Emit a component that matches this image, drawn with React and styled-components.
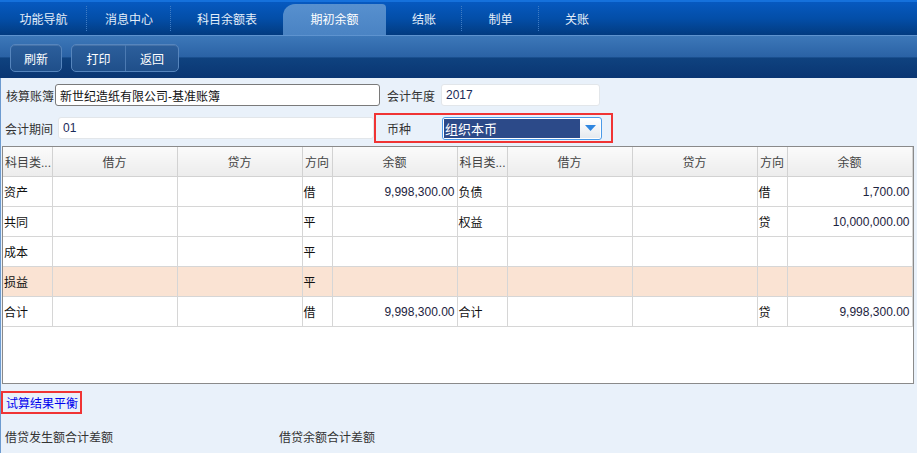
import React from 'react'
import styled, { createGlobalStyle } from 'styled-components'

const Global = createGlobalStyle`
  html, body { margin: 0; padding: 0; }
  body {
    font-family: "Liberation Sans", "Noto Sans CJK SC", sans-serif;
    font-size: 12px;
    color: #222;
    background: #e9f1fa;
  }
`

const Page = styled.div`
  width: 917px;
  height: 453px;
  display: flex;
  flex-direction: column;
  overflow: hidden;
`

const NavBar = styled.div`
  height: 35px;
  box-sizing: border-box;
  display: flex;
  align-items: flex-end;
  border-top: 2px solid #1571dc;
  background: linear-gradient(180deg, #0659c0 0%, #034ea8 50%, #023b80 100%);
`

const Tab = styled.div`
  position: relative;
  width: ${p => p.$w}px;
  height: ${p => (p.$active ? 31 : 33)}px;
  display: flex;
  align-items: center;
  justify-content: center;
  color: #e4eef9;
  font-size: 12px;
  box-sizing: border-box;
  ${p => p.$active && `
    padding-bottom: 2px;
    background: linear-gradient(180deg, #5790cf 0%, #4a83c3 100%);
    border-radius: 12px 4px 0 0;
    color: #ffffff;
  `}
  ${p => p.$sep && `
    &::after {
      content: '';
      position: absolute;
      right: 0;
      top: 4px;
      bottom: 4px;
      border-right: 1px dotted #3f7cc4;
    }
  `}
`

const Toolbar = styled.div`
  height: 43px;
  box-sizing: border-box;
  padding: 8px 10px 0;
  display: flex;
  gap: 9px;
  border-top: 1px solid #5e93cf;
  background: linear-gradient(180deg, #3d78b9 0%, #2a62a5 50%, #0f427f 52%, #0a3673 100%);
`

const BtnGroup = styled.div`
  display: flex;
  height: 28px;
  border: 1px solid #5685bd;
  border-radius: 5px;
  background: linear-gradient(180deg, #2c5f9c 0%, #1f4f8a 100%);
  box-shadow: inset 0 1px 0 rgba(255,255,255,0.12);
  box-sizing: border-box;
`

const Btn = styled.div`
  width: ${p => p.$w}px;
  display: flex;
  align-items: center;
  justify-content: center;
  color: #ffffff;
  font-size: 12px;
  & + & { border-left: 1px solid #4c7ab2; }
`

const Main = styled.div`
  flex: 1;
  border-left: 1px solid #6d9bd0;
  background: #e9f1fa;
  display: flex;
  flex-direction: column;
`

const FormRow = styled.div`
  display: flex;
  align-items: center;
  height: ${p => p.$h}px;
  margin-top: ${p => p.$mt}px;
`

const Label = styled.span`
  width: ${p => p.$w}px;
  padding-left: ${p => p.$pl || 0}px;
  color: #333;
  white-space: nowrap;
  box-sizing: border-box;
`

const Input = styled.div`
  width: ${p => p.$w}px;
  height: 22px;
  box-sizing: border-box;
  background: #fff;
  border: 1px solid ${p => (p.$dark ? '#7a7a7a' : '#e2e6ea')};
  border-radius: 3px;
  display: flex;
  align-items: center;
  padding-left: 4px;
  color: ${p => (p.$dark ? '#111' : '#1a2a5a')};
  font-size: 12px;
`

const Gap = styled.div`
  width: ${p => p.$w}px;
  flex: none;
`

const CurrencyBox = styled.div`
  width: 239px;
  height: 30px;
  box-sizing: border-box;
  border: 2px solid #f03434;
  display: flex;
  align-items: center;
  padding-left: 11px;
`

const Select = styled.div`
  width: 160px;
  height: 23px;
  box-sizing: border-box;
  border: 1px solid #4b9ae8;
  border-radius: 3px;
  background: #fff;
  display: flex;
  padding: 1px;
`

const Picked = styled.div`
  flex: 1;
  background: #2c4a89;
  color: #fff;
  display: flex;
  align-items: center;
  padding-left: 1px;
  font-size: 13px;
`

const Arrow = styled.div`
  width: 20px;
  background: linear-gradient(180deg, #ffffff 0%, #e6e9ee 100%);
  display: flex;
  align-items: center;
  justify-content: center;
`

const Grid = styled.div`
  margin: 3px 3px 0 1px;
  height: 238px;
  box-sizing: border-box;
  border: 1px solid #8a8a8a;
  background: #fff;
  overflow: hidden;
`

const Table = styled.table`
  border-collapse: collapse;
  table-layout: fixed;
  width: 909px;
`

const Th = styled.th`
  height: 29px;
  padding: 0 2px;
  font-weight: normal;
  color: #444;
  text-align: ${p => p.$align || 'center'};
  border-right: 1px solid #d2d2d2;
  border-bottom: 1px solid #d2d2d2;
  background: linear-gradient(180deg, #fbfbfb 0%, #ececec 100%);
  white-space: nowrap;
  overflow: hidden;
`

const Td = styled.td`
  height: 29px;
  padding: 0 ${p => (p.$num ? 2 : 1)}px 0 1px;
  text-align: ${p => (p.$num ? 'right' : 'left')};
  color: ${p => (p.$num ? '#1c2340' : '#111')};
  border-right: 1px solid #d6d6d6;
  border-bottom: 1px solid #d6d6d6;
  background: ${p => (p.$hl ? '#fae3d3' : '#fff')};
  white-space: nowrap;
  overflow: hidden;
`

const Result = styled.div`
  align-self: flex-start;
  margin: 7px 0 0 0;
  height: 23px;
  box-sizing: border-box;
  border: 2px solid #f03434;
  padding: 0 2px 0 3px;
  display: flex;
  align-items: center;
  color: #0000ee;
  font-size: 12px;
`

const Totals = styled.div`
  display: flex;
  margin-top: 14px;
  padding-left: 4px;
  color: #333;
`

const TotalItem = styled.span`
  width: ${p => p.$w}px;
`

const tabs = [
  { t: '功能导航', w: 87, sep: true },
  { t: '消息中心', w: 84, sep: true },
  { t: '科目余额表', w: 112 },
  { t: '期初余额', w: 103, active: true },
  { t: '结账', w: 76, sep: true },
  { t: '制单', w: 77, sep: true },
  { t: '关账', w: 76 },
]

const cols = [49, 125, 125, 30, 125, 50, 125, 125, 30, 125]
const heads = ['科目类...', '借方', '贷方', '方向', '余额', '科目类...', '借方', '贷方', '方向', '余额']

const rows = [
  ['资产', '', '', '借', '9,998,300.00', '负债', '', '', '借', '1,700.00'],
  ['共同', '', '', '平', '', '权益', '', '', '贷', '10,000,000.00'],
  ['成本', '', '', '平', '', '', '', '', '', ''],
  ['损益', '', '', '平', '', '', '', '', '', '', true],
  ['合计', '', '', '借', '9,998,300.00', '合计', '', '', '贷', '9,998,300.00'],
]

export default function App() {
  return (
    <Page>
      <Global />
      <NavBar>
        {tabs.map(tab => (
          <Tab key={tab.t} $w={tab.w} $active={tab.active} $sep={tab.sep}>{tab.t}</Tab>
        ))}
      </NavBar>
      <Toolbar>
        <BtnGroup><Btn $w={50}>刷新</Btn></BtnGroup>
        <BtnGroup>
          <Btn $w={53}>打印</Btn>
          <Btn $w={52}>返回</Btn>
        </BtnGroup>
      </Toolbar>
      <Main>
        <FormRow $h={22} $mt={6}>
          <Label $w={54} $pl={5}>核算账簿</Label>
          <Input $w={325} $dark>新世纪造纸有限公司-基准账簿</Input>
          <Gap $w={7} />
          <Label $w={54}>会计年度</Label>
          <Input $w={159}>2017</Input>
        </FormRow>
        <FormRow $h={30} $mt={7}>
          <Label $w={57} $pl={4}>会计期间</Label>
          <Input $w={316}>01</Input>
          <CurrencyBox>
            <Label $w={55}>币种</Label>
            <Select>
              <Picked>组织本币</Picked>
              <Arrow>
                <svg width="11" height="6" viewBox="0 0 11 6">
                  <path d="M0 0 H11 L5.5 6 Z" fill="#2f86e0" />
                </svg>
              </Arrow>
            </Select>
          </CurrencyBox>
        </FormRow>
        <Grid>
          <Table>
            <colgroup>
              {cols.map((w, i) => <col key={i} style={{ width: w }} />)}
            </colgroup>
            <thead>
              <tr>
                {heads.map((h, i) => (
                  <Th key={i} $align={h.startsWith('科目') ? 'left' : 'center'}>{h}</Th>
                ))}
              </tr>
            </thead>
            <tbody>
              {rows.map((r, ri) => (
                <tr key={ri}>
                  {r.slice(0, 10).map((c, ci) => (
                    <Td key={ci} $num={ci === 4 || ci === 9} $hl={r[10]}>{c}</Td>
                  ))}
                </tr>
              ))}
            </tbody>
          </Table>
        </Grid>
        <Result>试算结果平衡</Result>
        <Totals>
          <TotalItem $w={274}>借贷发生额合计差额</TotalItem>
          <TotalItem $w={200}>借贷余额合计差额</TotalItem>
        </Totals>
      </Main>
    </Page>
  )
}
